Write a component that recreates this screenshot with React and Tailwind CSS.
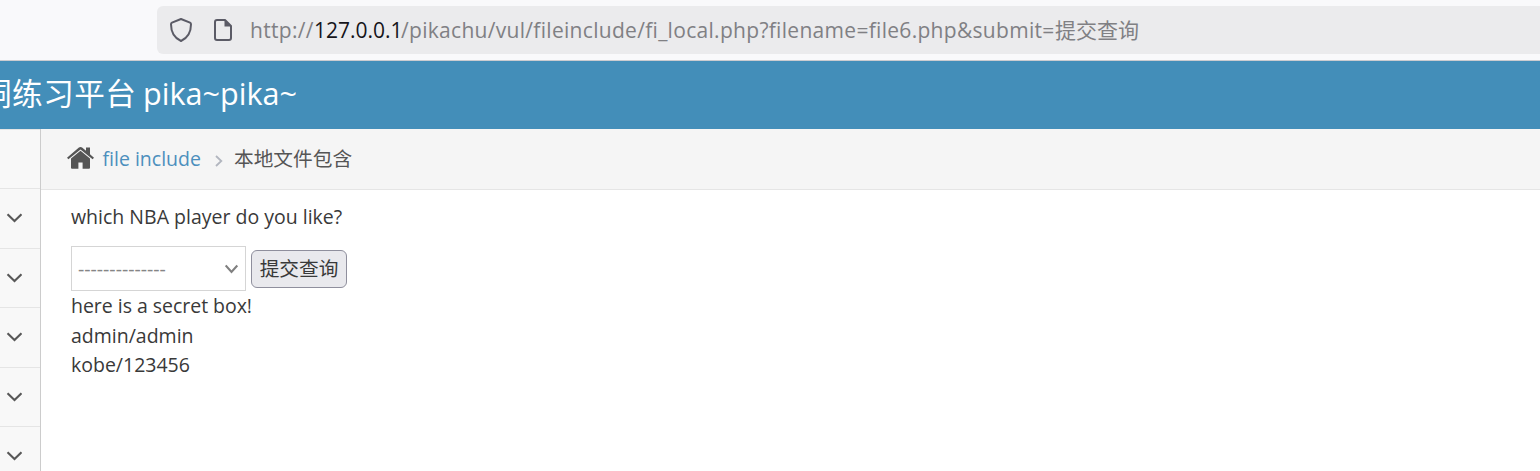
const FONT = "font-['Open_Sans','Noto_Sans_CJK_SC',sans-serif]";

function Chevron({ className }) {
  return (
    <svg className={className} width="16" height="10" viewBox="0 0 16 10" fill="none" stroke="currentColor" strokeWidth="2.100">
      <path d="M1.500 1.200 L8.500 8 L15.500 1.200" />
    </svg>
  );
}

function AddressBar() {
  return (
    <div className="flex h-[61px] shrink-0 border-b border-[#ccccd0] bg-[#f9f9fb] pl-[157px] pt-[6px]">
      <div className="flex h-12 flex-1 items-center rounded-l-md bg-[#ebebed] pl-3">
        <svg className="shrink-0 text-[#5b5b66]" width="24" height="26" viewBox="0 0 24 26" fill="none" stroke="currentColor" strokeWidth="2" strokeLinejoin="round">
          <path d="M12 2 L21 5.700 Q22 6.200 22 7.300 C22 15.500 18.200 21.200 12 24 C5.800 21.200 2 15.500 2 7.300 Q2 6.200 3 5.700 Z" />
        </svg>
        <svg className="ml-[19px] shrink-0 text-[#5b5b66]" width="22" height="24" viewBox="0 0 22 24" fill="none" stroke="currentColor" strokeWidth="2" strokeLinejoin="round">
          <path d="M5 2 H13 L19 8 V20 Q19 22 17 22 H5 Q3 22 3 20 V4 Q3 2 5 2 Z" />
          <path d="M12.500 2 V8.500 H19 Z" fill="currentColor" stroke="none" />
        </svg>
        <div className="ml-[16px] flex whitespace-nowrap text-[21px] leading-[30px] text-[#808084]">
          <span className="w-[64px] tracking-[0.3px]">http://</span>
          <span className="w-[87px] text-[#15141a]">127.0.0.1</span>
          <span className="w-[654px] tracking-[0.3px]">/pikachu/vul/fileinclude/fi_local.php?filename=file6.php&amp;submit=</span>
          <span>提交查询</span>
        </div>
      </div>
    </div>
  );
}

function Sidebar() {
  return (
    <aside className="flex w-[41px] shrink-0 flex-col border-r border-[#ccc] bg-[#f8f8f8] text-[#585858]">
      <div className="h-[60px] shrink-0 border-b border-t border-[#e5e5e5]" />
      {[60, 59, 60, 59, 60].map((height, i) => (
        <div key={i} className="flex shrink-0 items-center border-b border-[#e5e5e5] pb-px pl-[6px]" style={{ height }}>
          <Chevron />
        </div>
      ))}
    </aside>
  );
}

function Breadcrumb() {
  return (
    <nav className="flex h-[61px] items-center border-b border-[#e5e5e5] bg-[#f5f5f5] pl-[26px] text-[19.5px] text-[#555]">
      <svg className="-mt-px shrink-0" width="28" height="23" viewBox="0 0 28 23" fill="currentColor">
        <path d="M13.500 3.700 L23 11.500 V20.800 Q23 21.800 22 21.800 H15.600 V15.500 H11.400 V21.800 H5 Q4 21.800 4 20.800 V11.500 Z" />
        <path d="M13.500 0 Q14.400 0 15.100 0.600 L19 3.800 V0.500 H23 V7.200 L27 10.700 L25.600 12.300 L13.500 2.500 L1.400 12.300 L0 10.700 L11.900 0.600 Q12.600 0 13.500 0 Z" />
      </svg>
      <span className="ml-[7.500px] w-[112px] whitespace-nowrap text-[#4c8fbd]">file include</span>
      <svg className="mt-[3px] shrink-0 text-[#b2b6bf]" width="8" height="12" viewBox="0 0 8 12" fill="none" stroke="currentColor" strokeWidth="1.800">
        <path d="M1 1 L6.300 6 L1 11" />
      </svg>
      <span className="ml-[11.500px] whitespace-nowrap text-[19.700px]">本地文件包含</span>
    </nav>
  );
}

export default function App() {
  return (
    <div className={`flex h-[471px] w-[1540px] flex-col overflow-hidden bg-white ${FONT}`}>
      <AddressBar />
      <header className="flex h-[68px] shrink-0 items-center bg-[#438eb9] pb-[3px] text-[30.600px] text-white">
        <div className="-ml-[19px] flex whitespace-nowrap">
          <span className="w-[162px] tracking-[0.5px]">洞练习平台</span>
          <span>pika~pika~</span>
        </div>
      </header>
      <div className="flex min-h-0 flex-1">
        <Sidebar />
        <main className="min-w-0 flex-1 text-[19.5px] leading-[29.5px] text-[#393939]">
          <Breadcrumb />
          <div className="pl-[30px] pt-3">
            <p>which NBA player do you like?</p>
            <form className="mt-[14px] flex items-center gap-[5px]">
              <div className="flex h-[45px] w-[175px] items-center justify-between border border-[#d5d5d5] px-[6px] text-[#858585]">
                <span className="pt-px">--------------</span>
                <svg className="mt-px text-[#808080]" width="14" height="10" viewBox="0 0 14 10" fill="none" stroke="currentColor" strokeWidth="2.100">
                  <path d="M0.700 1.500 L6.500 8 L12.300 1.500" />
                </svg>
              </div>
              <button type="button" className="mt-[2px] h-[38px] w-[96px] whitespace-nowrap rounded-md border border-[#8f8f9d] bg-[#e9e9ed] text-[19.700px]">
                提交查询
              </button>
            </form>
            <p className="tracking-[-0.030px]">here is a secret box!</p>
            <p className="pt-[0.500px]">admin/admin</p>
            <p className="-mt-[0.500px]">kobe/123456</p>
          </div>
        </main>
      </div>
    </div>
  );
}
